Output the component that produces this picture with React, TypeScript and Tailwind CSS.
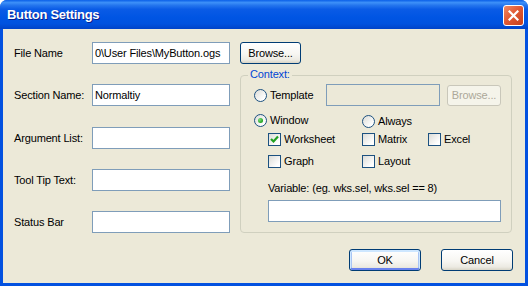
const font = "font-['Liberation_Sans',Arial,sans-serif] text-[11px] leading-[13px] tracking-[-0.15px] text-black";

function XpButton({
  label,
  className = "",
  isDefault = false,
  disabled = false,
}: {
  label: string;
  className?: string;
  isDefault?: boolean;
  disabled?: boolean;
}) {
  if (disabled) {
    return (
      <button
        disabled
        className={`flex items-center justify-center rounded-[3px] border border-[#C9C7BA] bg-[#F5F4EA] text-[#ACA899] ${className}`}
      >
        {label}
      </button>
    );
  }
  return (
    <button
      className={`flex items-center justify-center rounded-[3px] border border-[#003C74] bg-[linear-gradient(180deg,#FFFFFF_0%,#F7F6F2_55%,#ECEAE2_85%,#D8D4C6_100%)] ${
        isDefault
          ? "shadow-[inset_0_1px_0_1px_#CEE7FF,inset_0_-2px_0_0_#6982EE,inset_2px_0_0_0_#A9C5F4,inset_-2px_0_0_0_#A9C5F4]"
          : ""
      } ${className}`}
    >
      {label}
    </button>
  );
}

function TextBox({ value = "", className = "", disabled = false }: { value?: string; className?: string; disabled?: boolean }) {
  return (
    <input
      readOnly
      defaultValue={value}
      disabled={disabled}
      className={`h-[22px] border border-[#7F9DB9] px-[2px] outline-none ${disabled ? "bg-[#ECE9D8]" : "bg-white"} ${className}`}
    />
  );
}

function Radio({ label, checked = false }: { label: string; checked?: boolean }) {
  return (
    <div className="flex items-center gap-[3px]">
      <span className="flex h-[13px] w-[13px] items-center justify-center rounded-full border border-[#1C5180] bg-[linear-gradient(135deg,#DCDCD7_0%,#FFFFFF_80%)]">
        {checked && (
          <span className="h-[5px] w-[5px] rounded-full bg-[radial-gradient(circle_at_35%_35%,#7BE07B,#21A121_70%)]" />
        )}
      </span>
      <span>{label}</span>
    </div>
  );
}

function Check({ label, checked = false, className = "" }: { label: string; checked?: boolean; className?: string }) {
  return (
    <div className={`flex items-center gap-[3px] ${className}`}>
      <span className="flex h-[13px] w-[13px] items-center justify-center border border-[#1C5180] bg-[linear-gradient(135deg,#DCDCD7_0%,#FFFFFF_80%)]">
        {checked && (
          <svg width="11" height="11" viewBox="0 0 11 11">
            <polyline points="2,5 4.5,7.5 9,2.5" fill="none" stroke="#21A121" strokeWidth="2.2" />
          </svg>
        )}
      </span>
      <span>{label}</span>
    </div>
  );
}

const rows = [
  { label: "File Name", value: "0\\User Files\\MyButton.ogs" },
  { label: "Section Name:", value: "Normaltiy" },
  { label: "Argument List:", value: "" },
  { label: "Tool Tip Text:", value: "" },
  { label: "Status Bar", value: "" },
];

export default function App() {
  return (
    <div className={`flex h-[286px] w-[528px] flex-col overflow-hidden rounded-t-[7px] bg-[#0351E0] ${font}`}>
      {/* title bar */}
      <div className="flex h-[29px] shrink-0 items-center justify-between bg-[linear-gradient(180deg,#0A5FE8_0%,#3D90F8_9%,#2576EE_18%,#0A5BE6_32%,#0055E3_60%,#0052DF_82%,#0043C8_100%)] pl-[7px] pr-[4px]">
        <span className="text-[13px] font-bold leading-[16px] tracking-[-0.3px] text-white [text-shadow:1px_1px_0_#0A1E8C]">
          Button Settings
        </span>
        <span className="mt-[1px] flex h-[21px] w-[21px] items-center justify-center rounded-[3px] border border-white bg-[linear-gradient(135deg,#F08A64_0%,#E15A35_45%,#C6401C_100%)]">
          <svg width="11" height="11" viewBox="0 0 11 11">
            <path d="M1.5 1.5 L9.5 9.5 M9.5 1.5 L1.5 9.5" stroke="white" strokeWidth="2.2" strokeLinecap="square" />
          </svg>
        </span>
      </div>

      {/* body */}
      <div className="mx-[3px] mb-[3px] flex flex-1 flex-col bg-[#ECE9D8]">
        <div className="flex pl-[11px] pt-[13px]">
          <div className="flex w-[216px] flex-col gap-[20px]">
            {rows.map((r, i) => (
              <div key={r.label} className={`flex items-center ${i === 2 ? "mt-[1px]" : ""}`}>
                <span className="w-[78px]">{r.label}</span>
                <TextBox value={r.value} className="w-[138px]" />
              </div>
            ))}
          </div>

          <div className="ml-[10px] flex flex-col">
            <XpButton label="Browse..." className="h-[22px] w-[61px]" />

            <div className="relative mt-[11px] h-[158px] w-[272px] rounded-[4px] border border-[#D0D0BF] pl-[13px] pt-[8px]">
              <span className="absolute -top-[8px] left-[7px] bg-[#ECE9D8] px-[2px] text-[#0046D5]">Context:</span>

              <div className="flex items-center">
                <div className="w-[72px]">
                  <Radio label="Template" />
                </div>
                <TextBox disabled className="w-[114px]" />
                <XpButton disabled label="Browse..." className="ml-[7px] h-[21px] w-[54px]" />
              </div>

              <div className="mt-[8px] flex items-start">
                <div className="w-[108px]">
                  <Radio label="Window" checked />
                </div>
                <div className="mt-[1px]">
                  <Radio label="Always" />
                </div>
              </div>

              <div className="ml-[14px] mt-[5px] flex items-center">
                <Check label="Worksheet" checked className="w-[94px]" />
                <Check label="Matrix" className="w-[66px]" />
                <Check label="Excel" />
              </div>

              <div className="ml-[14px] mt-[9px] flex items-center">
                <Check label="Graph" className="w-[94px]" />
                <Check label="Layout" />
              </div>

              <div className="ml-[14px] mt-[14px]">Variable: (eg. wks.sel, wks.sel == 8)</div>
              <TextBox className="ml-[14px] mt-[5px] w-[233px]" />
            </div>
          </div>
        </div>

        <div className="mt-[16px] flex justify-end gap-[20px] pr-[12px]">
          <XpButton label="OK" isDefault className="h-[22px] w-[72px]" />
          <XpButton label="Cancel" className="h-[22px] w-[72px]" />
        </div>
      </div>
    </div>
  );
}
